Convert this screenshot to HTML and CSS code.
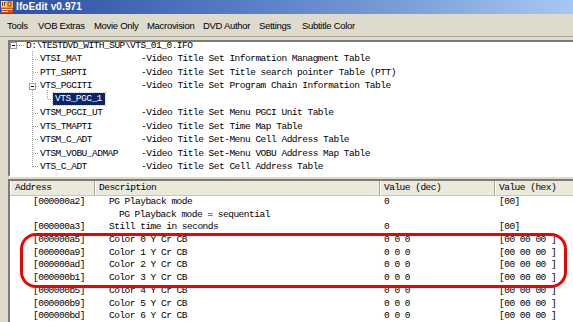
FILE: index.html
```html
<!DOCTYPE html>
<html>
<head>
<meta charset="utf-8">
<title>IfoEdit v0.971</title>
<link rel="stylesheet" href="styles.css">
</head>
<body>
<div class="window">
  <div class="titlebar">
    <svg class="app-icon" width="12" height="12" viewBox="0 0 12 12">
      <rect x="0" y="0" width="12" height="12" fill="#e8a030"/>
      <rect x="0" y="0" width="6" height="6" fill="#f8e060"/>
      <rect x="6" y="0" width="6" height="6" fill="#f0c040"/>
      <rect x="1" y="1" width="1" height="4" fill="#c03010"/>
      <rect x="3" y="1" width="2" height="1" fill="#c03010"/>
      <rect x="3" y="1" width="1" height="4" fill="#c03010"/>
      <rect x="7" y="1" width="3" height="4" fill="none" stroke="#c03010" stroke-width="1"/>
      <rect x="0" y="7" width="12" height="5" fill="#d05020"/>
      <rect x="1" y="8" width="10" height="1" fill="#fff0b0"/>
      <rect x="1" y="10" width="6" height="1" fill="#fff0b0"/>
    </svg>
    <span class="title">IfoEdit v0.971</span>
  </div>
  <div class="menubar">
    <span>Tools</span>
    <span>VOB Extras</span>
    <span>Movie Only</span>
    <span>Macrovision</span>
    <span>DVD Author</span>
    <span>Settings</span>
    <span>Subtitle Color</span>
  </div>
  <div class="client">
    <div class="pane tree">
      <svg class="tree-lines" width="60" height="133" viewBox="0 0 60 133">
        <g fill="none" stroke="#9a9a9a" stroke-width="1">
          <rect x="0.5" y="0.5" width="6" height="6" fill="#fff"/>
          <rect x="19.5" y="41.5" width="6" height="6" fill="#fff"/>
        </g>
        <g stroke="#000" stroke-width="1">
          <line x1="2" y1="3.5" x2="5" y2="3.5"/>
          <line x1="21" y1="44.5" x2="24" y2="44.5"/>
        </g>
        <g stroke="#a0a0a0" stroke-width="1" stroke-dasharray="1 1">
          <line x1="7" y1="3.5" x2="14" y2="3.5"/>
          <line x1="22.5" y1="9" x2="22.5" y2="41"/>
          <line x1="22.5" y1="48" x2="22.5" y2="125"/>
          <line x1="23" y1="17.5" x2="29" y2="17.5"/>
          <line x1="23" y1="30.5" x2="29" y2="30.5"/>
          <line x1="26" y1="44.5" x2="29" y2="44.5"/>
          <line x1="23" y1="71.5" x2="29" y2="71.5"/>
          <line x1="23" y1="84.5" x2="29" y2="84.5"/>
          <line x1="23" y1="97.5" x2="29" y2="97.5"/>
          <line x1="23" y1="111.5" x2="29" y2="111.5"/>
          <line x1="23" y1="124.5" x2="29" y2="124.5"/>
          <line x1="37.5" y1="48" x2="37.5" y2="57"/>
          <line x1="38" y1="57.5" x2="42" y2="57.5"/>
        </g>
      </svg>
      <div class="tree-rows">
        <div class="trow root"><span class="name">D:\TESTDVD_WITH_SUP\VTS_01_0.IFO</span></div>
        <div class="trow"><span class="name lvl1">VTSI_MAT</span><span class="desc">-Video Title Set Information Managment Table</span></div>
        <div class="trow"><span class="name lvl1">PTT_SRPTI</span><span class="desc">-Video Title Set Title search pointer Table (PTT)</span></div>
        <div class="trow"><span class="name lvl1">VTS_PGCITI</span><span class="desc">-Video Title Set Program Chain Information Table</span></div>
        <div class="trow"><span class="name lvl2"><span class="selected">VTS_PGC_1</span></span><span class="desc"></span></div>
        <div class="trow"><span class="name lvl1">VTSM_PGCI_UT</span><span class="desc">-Video Title Set Menu PGCI Unit Table</span></div>
        <div class="trow"><span class="name lvl1">VTS_TMAPTI</span><span class="desc">-Video Title Set Time Map Table</span></div>
        <div class="trow"><span class="name lvl1">VTSM_C_ADT</span><span class="desc">-Video Title Set-Menu Cell Address Table</span></div>
        <div class="trow"><span class="name lvl1">VTSM_VOBU_ADMAP</span><span class="desc">-Video Title Set-Menu VOBU Address Map Table</span></div>
        <div class="trow"><span class="name lvl1">VTS_C_ADT</span><span class="desc">-Video Title Set Cell Address Table</span></div>
      </div>
    </div>
    <div class="pane list">
      <div class="lhead"><span class="hcell">Address</span><span class="hcell">Description</span><span class="hcell">Value (dec)</span><span class="hcell">Value (hex)</span></div>
      <div class="lrows">
        <div class="lrow"><span class="addr">[000000a2]</span><span class="dsc">PG Playback mode</span><span class="dec">0</span><span class="hex">[00]</span></div>
        <div class="lrow"><span class="addr"></span><span class="dsc sub">PG Playback mode = sequential</span><span class="dec"></span><span class="hex"></span></div>
        <div class="lrow"><span class="addr">[000000a3]</span><span class="dsc">Still time in seconds</span><span class="dec">0</span><span class="hex">[00]</span></div>
        <div class="lrow"><span class="addr">[000000a5]</span><span class="dsc">Color 0 Y Cr CB</span><span class="dec">0 0 0</span><span class="hex">[00 00 00 ]</span></div>
        <div class="lrow"><span class="addr">[000000a9]</span><span class="dsc">Color 1 Y Cr CB</span><span class="dec">0 0 0</span><span class="hex">[00 00 00 ]</span></div>
        <div class="lrow"><span class="addr">[000000ad]</span><span class="dsc">Color 2 Y Cr CB</span><span class="dec">0 0 0</span><span class="hex">[00 00 00 ]</span></div>
        <div class="lrow"><span class="addr">[000000b1]</span><span class="dsc">Color 3 Y Cr CB</span><span class="dec">0 0 0</span><span class="hex">[00 00 00 ]</span></div>
        <div class="lrow"><span class="addr">[000000b5]</span><span class="dsc">Color 4 Y Cr CB</span><span class="dec">0 0 0</span><span class="hex">[00 00 00 ]</span></div>
        <div class="lrow"><span class="addr">[000000b9]</span><span class="dsc">Color 5 Y Cr CB</span><span class="dec">0 0 0</span><span class="hex">[00 00 00 ]</span></div>
        <div class="lrow"><span class="addr">[000000bd]</span><span class="dsc">Color 6 Y Cr CB</span><span class="dec">0 0 0</span><span class="hex">[00 00 00 ]</span></div>
      </div>
    </div>
  </div>
  <div class="callout"></div>
</div>
</body>
</html>
```

FILE: styles.css
```css
html, body {
  margin: 0;
  padding: 0;
}
body {
  width: 573px;
  height: 322px;
  overflow: hidden;
  background: #dedbcd;
  font-family: "Liberation Sans", Arial, sans-serif;
}
.window {
  position: relative;
  width: 573px;
  height: 322px;
  overflow: hidden;
}
.titlebar {
  height: 14px;
  display: flex;
  align-items: center;
  gap: 3px;
  padding-left: 1px;
  background: linear-gradient(90deg, #2b4ea2 0%, #4f74c0 35%, #7a9ed8 70%, #a8c8f2 100%);
}
.app-icon {
  display: block;
  flex: none;
}
.title {
  color: #fff;
  font-weight: bold;
  font-size: 10px;
  line-height: 14px;
  letter-spacing: 0.1px;
}
.menubar {
  height: 22px;
  display: grid;
  grid-template-columns: 31px 56px 53px 56px 56px 43px auto;
  align-items: center;
  padding-left: 7px;
  font-size: 9.5px;
  letter-spacing: -0.3px;
  color: #000;
  border-bottom: 1px solid #a8a596;
}
.client {
  width: 590px;
  padding: 3px 0 0 8px;
  display: flex;
  flex-direction: column;
  gap: 2px;
}
.pane {
  background: #fff;
  border: 2px solid;
  border-color: #7d7b70 #fff #fff #7d7b70;
  overflow: hidden;
}
.tree {
  position: relative;
  height: 133px;
}
.tree-lines {
  position: absolute;
  left: 0;
  top: 0;
}
.tree-rows {
  margin-top: -3px;
  font-family: "Liberation Mono", "Courier New", monospace;
  font-size: 9.5px;
  letter-spacing: -0.5px;
  line-height: 13.44px;
  color: #000;
}
.trow {
  display: grid;
  grid-template-columns: 131px auto;
  height: 13.44px;
}
.name, .desc {
  white-space: pre;
}
.trow.root .name {
  grid-column: 1 / -1;
  padding-left: 16px;
}
.name.lvl1 {
  padding-left: 30px;
}
.name.lvl2 {
  padding-left: 43px;
  display: flex;
  align-items: center;
}
.selected {
  display: block;
  height: 12px;
  line-height: 12px;
  padding: 0 3px 0 2px;
  background: #0a246a;
  color: #ffffff;
  outline: 1px dotted #c8c8a0;
}
.list {
  height: 150px;
}
.lhead, .lrow {
  display: grid;
  grid-template-columns: 85px 285px 115px 1fr;
  font-family: "Liberation Mono", "Courier New", monospace;
  font-size: 9.5px;
  letter-spacing: -0.5px;
  color: #000;
}
.hcell, .addr, .dsc, .dec, .hex {
  white-space: pre;
}
.lhead {
  height: 14px;
  line-height: 14px;
  background: #ebe8dc;
  border-bottom: 1px solid #c9c6b6;
}
.hcell {
  padding-left: 4px;
  border-right: 1px solid #aca899;
  box-shadow: inset 1px 0 #fff;
}
.hcell:first-child {
  padding-left: 5px;
}
.lrow {
  height: 12.7px;
  line-height: 12.7px;
}
.addr {
  padding-left: 23px;
}
.dsc {
  padding-left: 14px;
}
.dsc.sub {
  padding-left: 24px;
}
.dec, .hex {
  padding-left: 4px;
}
.callout {
  position: absolute;
  left: 20px;
  top: 233px;
  width: 547px;
  height: 55px;
  box-sizing: border-box;
  border: 3px solid #f20000;
  border-radius: 16px;
}
```
